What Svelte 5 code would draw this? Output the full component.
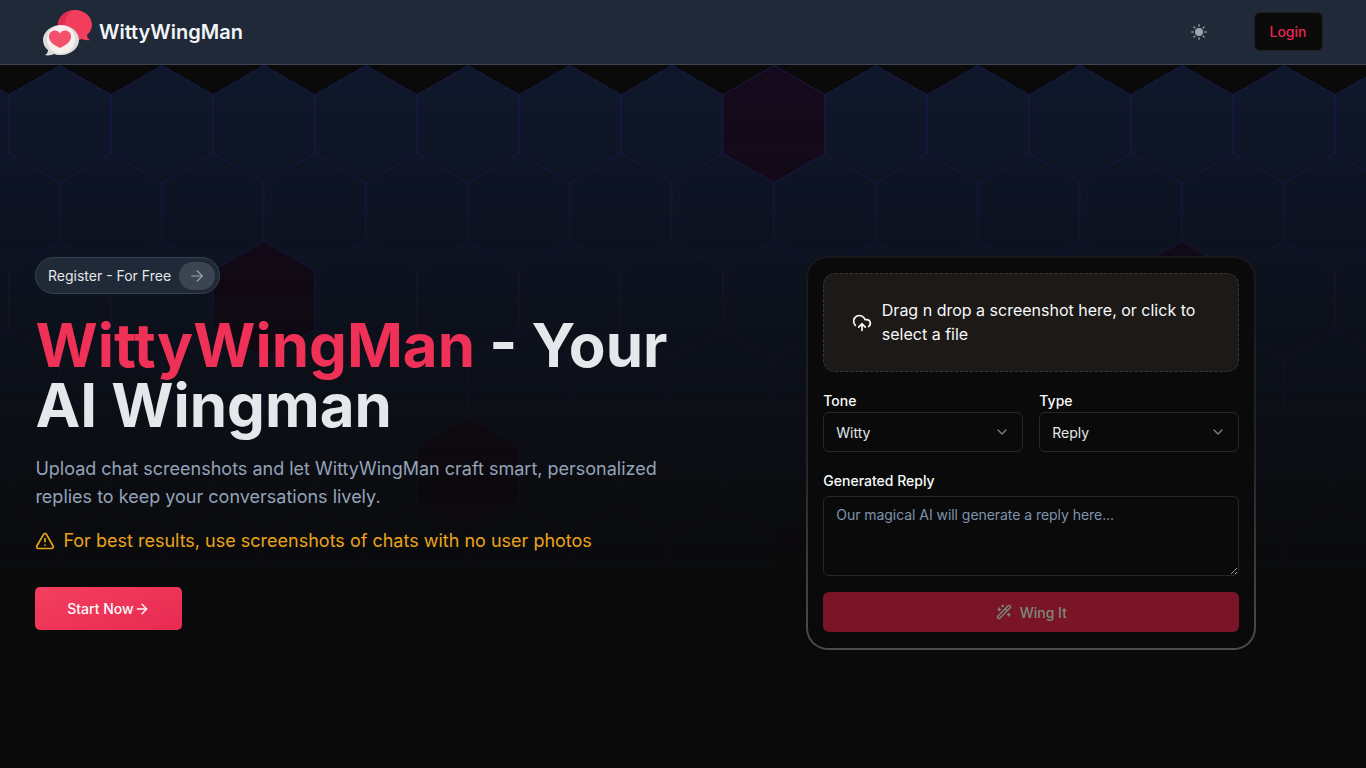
<script>
  const R = 58.7;
  const HW = 51;
  const tinted = new Set(['0:774', '2:264', '2:1182', '4:468', '5:825']);
  const hexes = [];
  for (let r = 0; r < 7; r++) {
    const cy = 0.5 + R + 88 * r;
    for (let cx = r % 2 ? -42 + 51 : -42; cx < 1450; cx += 102) {
      hexes.push({
        key: `${r}-${cx}`,
        tinted: tinted.has(`${r}:${cx}`),
        points: [
          [cx, cy - R],
          [cx + HW, cy - R / 2],
          [cx + HW, cy + R / 2],
          [cx, cy + R],
          [cx - HW, cy + R / 2],
          [cx - HW, cy - R / 2]
        ].map((p) => p.join(',')).join(' ')
      });
    }
  }
</script>

<div class="page">
  <header class="nav">
    <a class="brand" href="#top">
      <svg class="logo" viewBox="0 0 50 47" width="50" height="47" aria-hidden="true">
        <path class="bubble-red" d="M32 1C22 1 15 8 15 16c0 9 7 15 17 15 3 0 5 0 7-1 1 1 5 1.500 8 1-2-1-3-3-3-5 3-3 5-6 5-10C49 8 42 1 32 1Z" />
        <path class="bubble-shade" d="M15 16c0-8 7-15 17-15-5 2-10 6-10 13 0 7 4 12 10 17-10 0-17-6-17-15Z" />
        <path class="bubble-white" d="M18 16C8 16 0 23 0 31c0 4 2 8 5 10 0 2-1 4-3 5 3 1 7 0 9-1 2 1 5 1 7 1 10 0 18-7 18-15S28 16 18 16Z" />
        <circle class="bubble-inner" cx="18" cy="30.500" r="14" />
        <path class="heart" d="M17 39C11 36 6 33 6 27.500 6 24 8.500 21.500 12 21.500c2 0 4 1 5 3 1-2 3-3 5-3 3.500 0 6 2.500 6 6C28 33 23 36 17 39Z" />
      </svg>
      <span class="brand-name">WittyWingMan</span>
    </a>
    <div class="nav-actions">
      <button class="theme" aria-label="Toggle theme">
        <svg viewBox="0 0 16 16" width="16" height="16" aria-hidden="true">
          <circle cx="8" cy="8" r="4" fill="#9ca3af" />
          <g stroke="#8b93a0" stroke-width="1.400" stroke-linecap="round">
            <path d="M8 .8v1.400M8 13.800v1.400M.8 8h1.400M13.800 8h1.400M2.900 2.900l1 1M12.100 12.100l1 1M2.900 13.100l1-1M12.100 3.900l1-1" />
          </g>
        </svg>
      </button>
      <button class="login">Login</button>
    </div>
  </header>

  <main class="main">
    <div class="hex-bg" aria-hidden="true">
      <svg width="1366" height="600" viewBox="0 0 1366 600">
        {#each hexes as h (h.key)}
          <polygon class:tinted={h.tinted} points={h.points} />
        {/each}
      </svg>
    </div>

    <section class="hero">
      <a class="pill" href="#register">
        <span>Register - For Free</span>
        <span class="pill-arrow">
          <svg class="icon thin" viewBox="0 0 24 24" width="18" height="18" aria-hidden="true">
            <path d="M5 12h14" /><path d="m12 5 7 7-7 7" />
          </svg>
        </span>
      </a>
      <h1><span class="accent">WittyWingMan</span> - Your AI Wingman</h1>
      <p class="lead">Upload chat screenshots and let WittyWingMan craft smart, personalized replies to keep your conversations lively.</p>
      <p class="warn">
        <svg class="icon" viewBox="0 0 24 24" width="20" height="20" aria-hidden="true">
          <path d="m21.730 18-8-14a2 2 0 0 0-3.480 0l-8 14A2 2 0 0 0 4 21h16a2 2 0 0 0 1.730-3" />
          <path d="M12 9v4" /><path d="M12 17h.01" />
        </svg>
        <span>For best results, use screenshots of chats with no user photos</span>
      </p>
      <button class="start">
        <span>Start Now</span>
        <svg class="icon" viewBox="0 0 24 24" width="16" height="16" aria-hidden="true">
          <path d="M5 12h14" /><path d="m12 5 7 7-7 7" />
        </svg>
      </button>
    </section>

    <section class="card">
      <div class="drop">
        <svg class="icon" viewBox="0 0 24 24" width="20" height="20" aria-hidden="true">
          <path d="M12 13v8" />
          <path d="M4 14.899A7 7 0 1 1 15.710 8h1.790a4.500 4.500 0 0 1 2.500 8.242" />
          <path d="m8 17 4-4 4 4" />
        </svg>
        <p>Drag n drop a screenshot here, or click to select a file</p>
      </div>

      <div class="fields">
        <div class="field">
          <span class="label">Tone</span>
          <div class="select">
            <span>Witty</span>
            <svg class="icon chev" viewBox="0 0 24 24" width="16" height="16" aria-hidden="true"><path d="m6 9 6 6 6-6" /></svg>
          </div>
        </div>
        <div class="field">
          <span class="label">Type</span>
          <div class="select">
            <span>Reply</span>
            <svg class="icon chev" viewBox="0 0 24 24" width="16" height="16" aria-hidden="true"><path d="m6 9 6 6 6-6" /></svg>
          </div>
        </div>
      </div>

      <label class="field reply">
        <span class="label">Generated Reply</span>
        <textarea placeholder="Our magical AI will generate a reply here..."></textarea>
      </label>

      <button class="wing">
        <svg class="icon" viewBox="0 0 24 24" width="16" height="16" aria-hidden="true">
          <path d="m21.640 3.640-1.280-1.280a1.210 1.210 0 0 0-1.720 0L2.360 18.640a1.210 1.210 0 0 0 0 1.720l1.280 1.280a1.200 1.200 0 0 0 1.720 0L21.640 5.360a1.200 1.200 0 0 0 0-1.720" />
          <path d="m14 7 3 3" /><path d="M5 6v4" /><path d="M19 14v4" /><path d="M10 2v2" /><path d="M7 8H3" /><path d="M21 16h-4" /><path d="M11 3H9" />
        </svg>
        <span>Wing It</span>
      </button>
    </section>
  </main>
</div>

<style>
  :global(body) {
    margin: 0;
    background: #0a0a0a;
  }
  .page {
    min-height: 768px;
    display: flex;
    flex-direction: column;
    background: #0a0a0a;
    color: #f8fafc;
    font-family: Inter, "Liberation Sans", sans-serif;
  }
  a {
    color: inherit;
    text-decoration: none;
  }
  button {
    font: inherit;
    cursor: pointer;
  }
  .icon {
    display: block;
    flex: none;
    fill: none;
    stroke: currentColor;
    stroke-width: 2;
    stroke-linecap: round;
    stroke-linejoin: round;
  }
  .icon.thin {
    stroke-width: 1.500;
  }

  .nav {
    height: 64px;
    display: flex;
    align-items: center;
    justify-content: space-between;
    padding: 0 43px 0 43px;
    background: #1f2937;
    border-bottom: 1px solid #3f4550;
  }
  .brand {
    display: flex;
    align-items: center;
    gap: 6px;
  }
  .logo {
    display: block;
    margin-top: 1px;
  }
  .bubble-red { fill: #f23d5d; }
  .bubble-shade { fill: #dc2f50; }
  .bubble-white { fill: #dcdcdc; }
  .bubble-inner { fill: #f7eeee; }
  .heart { fill: #f4506b; }
  .brand-name {
    font-size: 20px;
    font-weight: 600;
    color: #f1f5f9;
  }
  .nav-actions {
    display: flex;
    align-items: center;
    gap: 47px;
  }
  .theme {
    display: block;
    padding: 0;
    background: none;
    border: 0;
  }
  .theme svg {
    display: block;
  }
  .login {
    width: 69px;
    height: 39px;
    margin-top: -1px;
    padding: 0 1px 0 0;
    background: #0a0a0a;
    border: 1px solid #1f2022;
    border-radius: 6px;
    color: #e8274f;
    font-size: 14px;
    font-weight: 500;
  }

  .main {
    position: relative;
    flex: 1;
    display: flex;
    align-items: flex-start;
    padding: 191px 109.700px 0 35.400px;
    justify-content: space-between;
  }
  .hex-bg {
    position: absolute;
    top: 0;
    left: 0;
    width: 1366px;
    height: 600px;
    overflow: hidden;
    -webkit-mask-image: linear-gradient(to bottom, #000 5%, transparent 90%);
    mask-image: linear-gradient(to bottom, #000 5%, transparent 90%);
  }
  .hex-bg svg {
    display: block;
  }
  polygon {
    fill: #0f172a;
    stroke: #1c1a4c;
    stroke-width: 1;
  }
  polygon.tinted {
    fill: #150a1b;
  }

  .hero {
    position: relative;
    width: 672px;
    padding-top: 1px;
  }
  .pill {
    display: inline-flex;
    align-items: center;
    box-sizing: border-box;
    height: 37px;
    padding: 0 3px 0 11.600px;
    gap: 8.400px;
    background: #1f2937;
    border: 1px solid #374151;
    border-radius: 999px;
    font-size: 14px;
    color: #e5e7eb;
  }
  .pill-arrow {
    width: 36px;
    height: 28px;
    margin-right: 1px;
    display: flex;
    align-items: center;
    justify-content: center;
    border-radius: 14px;
    background: #3b4450;
    color: #9ca3af;
  }
  h1 {
    margin: 21px 0 0;
    font-size: 60px;
    line-height: 60px;
    font-weight: 700;
    color: #e5e7eb;
  }
  .accent {
    color: #ef3157;
  }
  .lead {
    margin: 20px 0 0;
    font-size: 18px;
    line-height: 28px;
    color: #94a3b8;
  }
  .warn {
    display: flex;
    align-items: center;
    gap: 8px;
    margin: 16px 0 0;
    font-size: 18px;
    line-height: 28px;
    color: #eaa31c;
  }
  .start {
    display: flex;
    align-items: center;
    justify-content: center;
    width: 147px;
    height: 43px;
    margin-top: 32px;
    padding: 0 1px 0 0;
    border: 0;
    border-radius: 5px;
    background: linear-gradient(160deg, #f43f5e, #e82a52);
    color: #f8fafc;
    font-size: 14px;
    font-weight: 500;
  }

  .card {
    position: relative;
    box-sizing: border-box;
    width: 450px;
    height: 394px;
    padding: 15px;
    display: flex;
    flex-direction: column;
    background:
      linear-gradient(#0a0a0a, #0a0a0a) padding-box,
      linear-gradient(to bottom, #18181a, #242426 50%, #504b46) border-box;
    border: 2px solid transparent;
    border-radius: 22px;
  }
  .drop {
    box-sizing: border-box;
    height: 99px;
    display: flex;
    align-items: center;
    gap: 9.500px;
    padding: 0 27px 0 28px;
    background: #1c1917;
    border: 1px dashed #33363c;
    border-radius: 12px;
    font-size: 16px;
    line-height: 24px;
    color: #f8fafc;
  }
  .drop p {
    margin: 0;
    padding-bottom: 2px;
  }
  .fields {
    display: grid;
    grid-template-columns: 1fr 1fr;
    gap: 16px;
    margin-top: 20px;
  }
  .field {
    display: flex;
    flex-direction: column;
    gap: 3px;
  }
  .label {
    font-size: 14px;
    line-height: 17px;
    font-weight: 500;
    color: #f8fafc;
  }
  .select {
    box-sizing: border-box;
    height: 40px;
    display: flex;
    align-items: center;
    justify-content: space-between;
    padding: 0 12px;
    background: #0a0a0a;
    border: 1px solid #27272a;
    border-radius: 6px;
    font-size: 14px;
    color: #e5e7eb;
  }
  .chev {
    color: #808080;
  }
  .reply {
    margin-top: 20px;
    gap: 7px;
  }
  textarea {
    display: block;
    box-sizing: border-box;
    width: 100%;
    height: 80px;
    padding: 8px 12px;
    background: #0a0a0a;
    border: 1px solid #27272a;
    border-radius: 6px;
    color: #f8fafc;
    font: 14px/20px Inter, "Liberation Sans", sans-serif;
    letter-spacing: -0.050px;
    outline: none;
  }
  textarea::placeholder {
    color: #7f93ad;
    opacity: 1;
  }
  .wing {
    height: 40px;
    margin-top: 16px;
    display: flex;
    align-items: center;
    justify-content: center;
    gap: 8px;
    padding: 0;
    border: 0;
    border-radius: 6px;
    background: #7a1528;
    color: #7a8a7c;
    font-size: 14px;
    font-weight: 500;
  }
</style>
